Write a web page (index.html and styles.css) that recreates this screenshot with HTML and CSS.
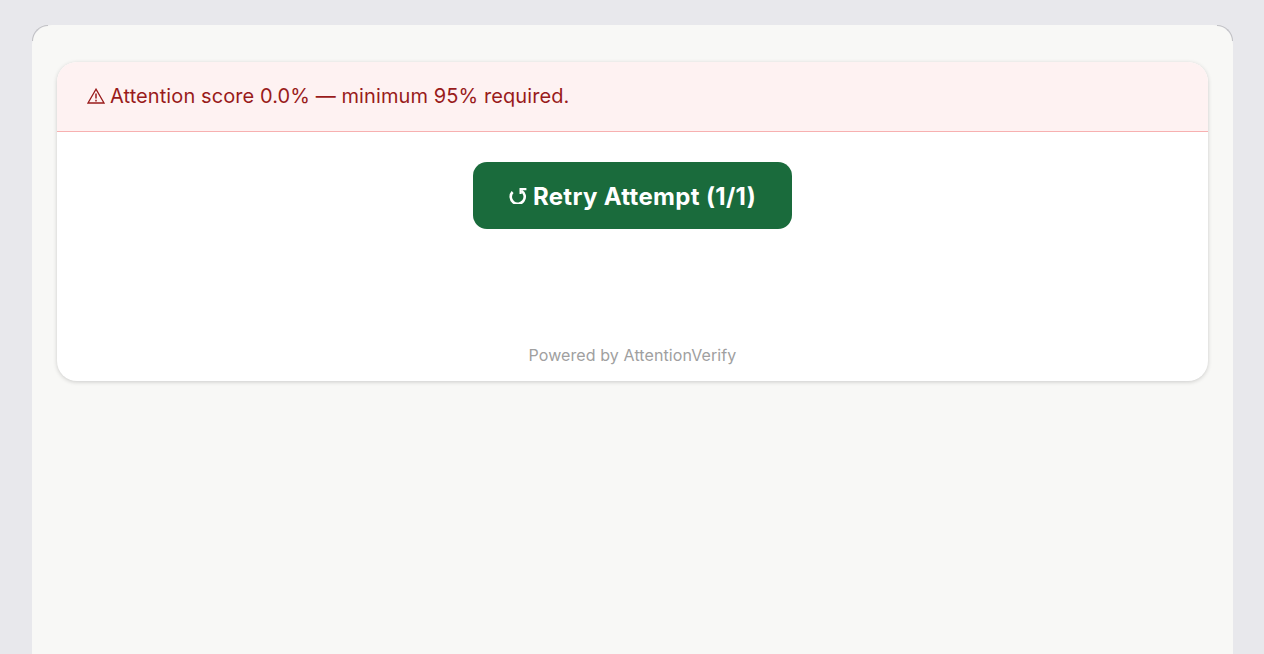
FILE: index.html
```html
<!DOCTYPE html>
<html>
<head>
  <title>Attention Check</title>
  <link rel="stylesheet" href="styles.css">
</head>
<body>
  <div class="frame">
    <div class="card">
      <div class="alert">
        <svg class="alert-icon" viewBox="0 0 18 16" aria-hidden="true">
          <path d="M9 1.2 L17 15 H1 Z" fill="none" stroke="#991b1b" stroke-width="1.3"/>
          <path d="M9 5.6 V10.6" stroke="#991b1b" stroke-width="1.5"/>
          <path d="M9 11.8 V13.4" stroke="#991b1b" stroke-width="1.5"/>
        </svg>
        <span>Attention score 0.0% — minimum 95% required.</span>
      </div>
      <div class="actions">
        <button class="retry">
          <svg class="retry-icon" viewBox="0 0 18 16" aria-hidden="true">
            <path d="M3.6 4 A7 7 0 1 0 12.4 2.8" fill="none" stroke="#fff" stroke-width="2.6"/>
            <path d="M11.6 6 V1.2 H17.4" fill="none" stroke="#fff" stroke-width="2.2"/>
          </svg>
          <span>Retry Attempt (1/1)</span>
        </button>
      </div>
      <div class="footer">Powered by AttentionVerify</div>
    </div>
  </div>
</body>
</html>
```

FILE: styles.css
```css
html, body {
  height: 100%;
}

body {
  margin: 0;
  padding: 25px 31px 0 32px;
  box-sizing: border-box;
  background-color: #e8e8ec;
  font-family: "Inter", "Liberation Sans", sans-serif;
  overflow: hidden;
}

.frame {
  position: relative;
  height: 100%;
  box-sizing: border-box;
  padding: 37px 25px 0;
  background-color: #f8f8f6;
  border-radius: 20px 20px 0 0;
}

/* thin grey arcs on the two top corners */
.frame::before,
.frame::after {
  content: "";
  position: absolute;
  top: 0;
  width: 16px;
  height: 16px;
  box-sizing: border-box;
  border-top: 1px solid #c0c0c4;
}

.frame::before {
  left: 0;
  border-left: 1px solid #c0c0c4;
  border-top-left-radius: 16px;
}

.frame::after {
  right: 0;
  border-right: 1px solid #c0c0c4;
  border-top-right-radius: 16px;
}

.card {
  height: 319px;
  box-sizing: border-box;
  display: flex;
  flex-direction: column;
  background-color: #fff;
  border-radius: 20px;
  box-shadow: 0 1px 4px rgba(0, 0, 0, 0.18);
  overflow: hidden;
}

.alert {
  height: 70px;
  box-sizing: border-box;
  padding: 0 30px 1px;
  display: flex;
  align-items: center;
  gap: 5px;
  background-color: #fef2f2;
  border-bottom: 1px solid #f7b0b0;
  color: #991b1b;
  font-size: 20px;
  letter-spacing: 0.09px;
}

.alert-icon {
  width: 18px;
  height: 16px;
}

.actions {
  display: flex;
  justify-content: center;
  padding-top: 30px;
}

.retry {
  width: 319px;
  height: 67px;
  padding: 1px 0 0;
  display: flex;
  align-items: center;
  justify-content: center;
  gap: 6px;
  background-color: #1a6b3c;
  border: none;
  border-radius: 14px;
  color: #fff;
  font-family: inherit;
  font-size: 24px;
  font-weight: 700;
  letter-spacing: 0.33px;
}

.retry-icon {
  width: 18px;
  height: 16px;
}

.footer {
  margin-top: auto;
  padding-bottom: 16px;
  text-align: center;
  color: #a0a0a0;
  font-size: 16px;
  line-height: 20px;
  letter-spacing: 0.1px;
}
```
